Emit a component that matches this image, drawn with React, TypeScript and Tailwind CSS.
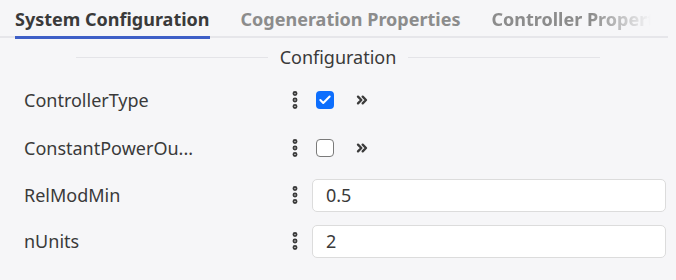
import { Check, ChevronsRight, EllipsisVertical } from 'lucide-react';

const font = { fontFamily: '"Noto Sans", "Open Sans", sans-serif' };

const Dots = () => (
  <div className="w-[22px] flex justify-center text-[#3b3b3b]">
    <EllipsisVertical size={22} strokeWidth={3.4} />
  </div>
);

const CheckRow = ({ label, checked }: { label: string; checked: boolean }) => (
  <div className="flex items-center h-[48px]">
    <div className="w-[284px] pl-6 truncate">{label}</div>
    <div className="flex items-center">
      <Dots />
      <div className="ml-[10px]">
        {checked ? (
          <div className="w-[18px] h-[18px] rounded-[4px] bg-[#0d6efd] flex items-center justify-center">
            <Check size={14} strokeWidth={3.5} color="white" />
          </div>
        ) : (
          <div className="w-[18px] h-[18px] rounded-[4px] border border-[#7a7a7a] bg-white" />
        )}
      </div>
      <div className="ml-[20px] text-[#3b3b3b]">
        <ChevronsRight size={16} strokeWidth={3.5} />
      </div>
    </div>
  </div>
);

const InputRow = ({ label, value }: { label: string; value: string }) => (
  <div className="flex items-center h-[46px]">
    <div className="w-[284px] pl-6 truncate">{label}</div>
    <div className="flex items-center flex-1 pr-[10px]">
      <Dots />
      <div className="ml-[6px] flex-1 h-[33px] rounded-[5px] border border-[#dcdcdc] bg-white flex items-center px-[13px]">
        {value}
      </div>
    </div>
  </div>
);

export default function App() {
  return (
    <div className="w-[676px] h-[280px] bg-[#f6f6f8] text-[#3a3a3a] text-[18px] overflow-hidden" style={font}>
      <div className="relative flex items-end h-[39px] pl-[15px] gap-[31px] overflow-hidden">
        <div className="absolute left-0 right-[8px] bottom-[1px] h-[2px] bg-[#e6e6ea]" />
        <div className="relative font-bold text-[#3a3a3a] leading-[24px] pb-[5px] border-b-[3px] border-[#3e5fc7] whitespace-nowrap">
          System Configuration
        </div>
        <div className="relative font-bold text-[#8c8c8c] leading-[24px] pb-[8px] whitespace-nowrap">Cogeneration Properties</div>
        <div
          className="relative font-bold text-[#8c8c8c] leading-[24px] pb-[8px] whitespace-nowrap"
          style={{ maskImage: 'linear-gradient(to right, black 100px, transparent 160px)' }}
        >
          Controller Properties
        </div>
      </div>
      <div className="flex items-center justify-center gap-[12px] h-[36px]">
        <div className="w-[192px] h-px bg-[#e4e4e8]" />
        <div className="text-[#3a3a3a]">Configuration</div>
        <div className="w-[192px] h-px bg-[#e4e4e8]" />
      </div>
      <div className="pt-[1px]">
        <CheckRow label="ControllerType" checked />
        <CheckRow label="ConstantPowerOu..." checked={false} />
        <InputRow label="RelModMin" value="0.5" />
        <InputRow label="nUnits" value="2" />
      </div>
    </div>
  );
}
